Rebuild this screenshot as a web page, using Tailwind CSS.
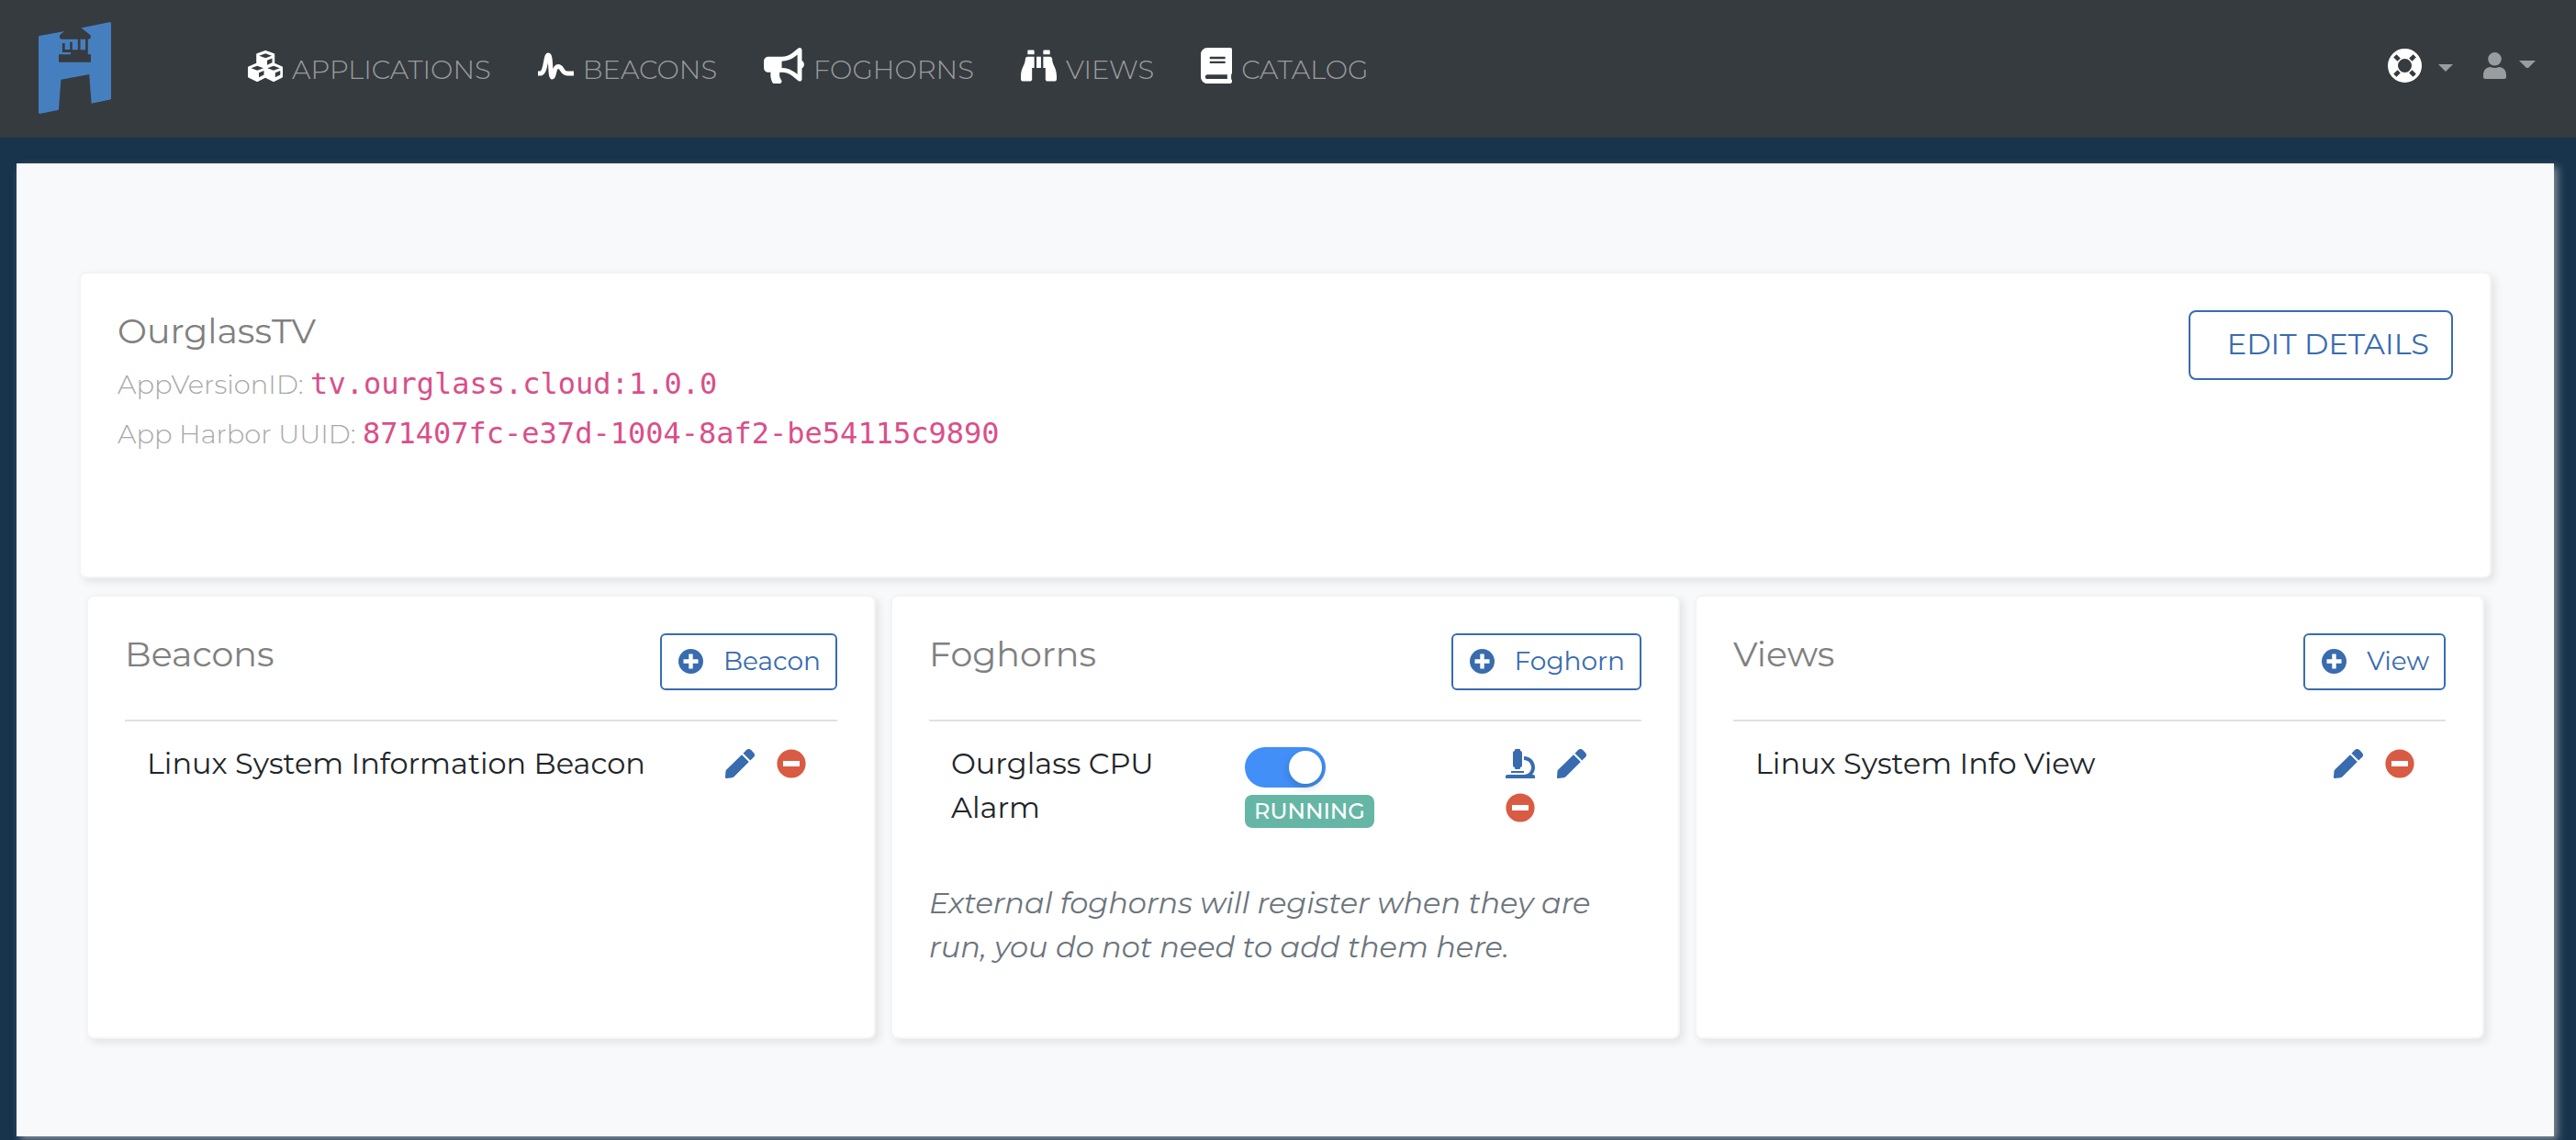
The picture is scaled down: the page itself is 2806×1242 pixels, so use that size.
<!DOCTYPE html>
<html lang="en">
<head>
<meta charset="utf-8">
<meta name="viewport" content="width=device-width, initial-scale=1">
<title>OurglassTV</title>
<script src="https://cdn.jsdelivr.net/npm/@tailwindcss/browser@4"></script>
</head>
<body class="flex min-h-screen flex-col bg-[#18344d] font-['Montserrat','DejaVu_Sans',sans-serif] text-[32px] leading-[48px] text-[#212529]">

<!-- Icon sprite -->
<svg class="hidden" aria-hidden="true">
  <symbol id="plus" viewBox="0 0 27 27"><circle cx="13.5" cy="13.5" r="13.5"/><path fill="#fff" d="M11.3 5.5h4.4v5.800h5.800v4.400h-5.800v5.800h-4.400v-5.800H5.500v-4.400h5.800z"/></symbol>
  <symbol id="minus" viewBox="0 0 32 32"><circle cx="16" cy="16" r="15.600"/><path fill="#fff" d="M7 13h18v6H7z"/></symbol>
  <symbol id="pencil" viewBox="0 0 32 32"><path d="M18 6.200 25.800 14 9.500 30.300a3 3 0 0 1-1.800.9L1.400 32A1.300 1.300 0 0 1 0 30.600l.5-6.300a3 3 0 0 1 .9-1.800zM19.500 4.700l3.600-3.600a3.600 3.600 0 0 1 5 0l2.800 2.800a3.600 3.600 0 0 1 0 5l-3.600 3.600z"/></symbol>
  <symbol id="microscope" viewBox="0 0 32 32"><path d="M10 2V1a1 1 0 0 1 1-1h4a1 1 0 0 1 1 1v1a2 2 0 0 1 2 2v14a2 2 0 0 1-2 2v1a1 1 0 0 1-1 1h-4a1 1 0 0 1-1-1v-1a2 2 0 0 1-2-2V4a2 2 0 0 1 2-2zM6 24h14v2H6zM20 8c7 0 12 5.500 12 12 0 3.200-1.200 6-3 8h1a2 2 0 0 1 2 2v2H0v-2a2 2 0 0 1 2-2h18c4.800 0 8-3.600 8-8s-3.600-8-8-8z"/></symbol>
</svg>

<header class="flex h-[150px] items-center bg-[#363b3f] pr-[44px] pl-[42px] pb-[7px] text-[#9a9d9f]">
  <a href="#" aria-label="Home">
    <svg class="mt-[5px] h-[100px] w-[79px]" viewBox="0 0 79 100">
      <path fill="#467fbf" d="M1 15 28.500 10 23 14.500V17.500L25 18.300H54.500L56.500 17.500V14.500L46 6.500 78 0 79 1V83.500L78 84.500 57.600 88.700 55.200 57 24.400 62.700 22 95 21 96 1 100 0 99V16z"/>
      <path fill="#467fbf" d="M23 16h33v20H23z"/>
      <path fill="#363b3f" d="M28.500 10 38 6H46L56.500 14.500V17.500L54.500 18.700H25L23 17.500V14.500zM22 35.300H57V43.700H22zM25.900 23h2.800v7h5.500v-8.300h2.600v8.600h6V18h2.700v12.300H51V18h2.800v18H35v-3h-9.100z"/>
    </svg>
  </a>
  <nav class="ml-[149px] flex items-center gap-[51px] text-[29px] font-light">
    <a href="#" class="flex items-center gap-[10px]">
      <svg class="h-[34px] w-[38px]" viewBox="0 0 38 34"><path fill="#fff" stroke="#fff" stroke-width="2" stroke-linejoin="round" d="M19.200 1 28.200 4.300V14.500L37 18.300V28.500L28 33 19 28.500 10.200 33 1 28.500V18.300L10.200 14.500V4.300z"/><path fill="#363b3f" d="M12.300 5.700 19.200 3.300 26 5.700 19.200 8.300zM21 10.800 26.500 8.500V13.200L21 15.800zM3.500 19.200 10.200 16.800 17 19.200 10.200 21.800zM12 24.300 17.500 22V26.500L12 29.300zM21.300 19.200 28 16.800 34.800 19.200 28 21.800zM29.800 24.300 35.300 22V26.500L29.800 29.300z"/></svg>
      <span class="pt-2">APPLICATIONS</span>
    </a>
    <a href="#" class="flex items-center gap-[10px]">
      <svg class="h-[30px] w-[39px]" viewBox="0 0 39 30" fill="none" stroke="#fff" stroke-width="5" stroke-linejoin="round"><path d="M0 23h2.500C9 23 8 3 11.300 3S13 27 15.500 27 17 15.500 22 15.500 25.500 23 32 23h7"/></svg>
      <span class="pt-2">BEACONS</span>
    </a>
    <a href="#" class="flex items-center gap-[10px]">
      <svg class="h-[39px] w-[44px]" viewBox="0 0 576 512" fill="#fff"><path d="M576 240c0-23.630-12.950-44.040-32-55.120V32.010C544 23.260 537.020 0 512 0c-7.120 0-14.190 2.380-19.980 7.020l-85.030 68.030C364.280 109.190 310.660 128 256 128H64c-35.350 0-64 28.650-64 64v96c0 35.350 28.650 64 64 64h33.700c-1.390 10.480-2.180 21.140-2.180 32 0 39.770 9.260 77.350 25.560 110.940 5.190 10.690 16.520 17.060 28.400 17.060h74.280c26.050 0 41.690-29.840 25.900-50.560-16.400-21.520-26.150-48.360-26.150-77.440 0-11.110 1.620-21.790 4.410-32H256c54.660 0 108.280 18.810 150.980 52.950l85.030 68.030a32.023 32.023 0 0 0 19.980 7.020c24.920 0 32-22.780 32-32V295.130C563.050 284.040 576 263.630 576 240zm-96 141.420l-33.050-26.440C392.950 311.780 325.120 288 256 288v-96c69.120 0 136.950-23.780 190.950-66.980L480 98.580v282.840z"/></svg>
      <span class="pt-2">FOGHORNS</span>
    </a>
    <a href="#" class="flex items-center gap-[10px]">
      <svg class="h-[39px] w-[39px]" viewBox="0 0 512 512" fill="#fff"><path d="M416 48c0-8.840-7.160-16-16-16h-64c-8.840 0-16 7.160-16 16v48h96V48zM63.910 159.990C61.400 253.840 3.460 274.220 0 404v44c0 17.670 14.330 32 32 32h96c17.670 0 32-14.330 32-32V288h32V128H95.840c-17.630 0-31.450 14.370-31.930 31.990zm384.180 0c-.48-17.620-14.300-31.990-31.930-31.990H320v160h32v160c0 17.670 14.330 32 32 32h96c17.670 0 32-14.330 32-32v-44c-3.460-129.780-61.400-150.160-63.910-244.010zM176 32h-64c-8.840 0-16 7.160-16 16v48h96V48c0-8.840-7.160-16-16-16zm48 256h64V128h-64v160z"/></svg>
      <span class="pt-2">VIEWS</span>
    </a>
    <a href="#" class="flex items-center gap-[10px]">
      <svg class="h-[39px] w-[34px]" viewBox="0 0 448 512" fill="#fff"><path d="M448 360V24c0-13.300-10.700-24-24-24H96C43 0 0 43 0 96v320c0 53 43 96 96 96h328c13.300 0 24-10.700 24-24v-16c0-7.500-3.500-14.300-8.900-18.700-4.200-15.400-4.200-59.300 0-74.700 5.400-4.300 8.900-11.100 8.900-18.600zM128 134c0-3.300 2.700-6 6-6h212c3.300 0 6 2.700 6 6v20c0 3.300-2.700 6-6 6H134c-3.300 0-6-2.700-6-6v-20zm0 64c0-3.300 2.700-6 6-6h212c3.300 0 6 2.700 6 6v20c0 3.300-2.700 6-6 6H134c-3.300 0-6-2.700-6-6v-20zm253.400 250H96c-17.700 0-32-14.300-32-32 0-17.600 14.400-32 32-32h285.400c-1.900 17.100-1.900 46.900 0 64z"/></svg>
      <span class="pt-2">CATALOG</span>
    </a>
  </nav>
  <div class="ml-auto flex items-center gap-[33px]">
    <button type="button" aria-label="Help" class="flex items-center gap-[18px]">
      <svg class="size-[37px]" viewBox="0 0 37 37"><circle cx="18.500" cy="18.500" r="13" fill="none" stroke="#fff" stroke-width="11"/><path stroke="#363b3f" stroke-width="4.600" d="M7.800 7.800 12.200 12.200M29.200 7.800 24.800 12.200M7.800 29.200 12.200 24.800M29.200 29.200 24.800 24.800"/></svg>
      <svg class="mt-1 h-2 w-4" viewBox="0 0 16 8" fill="currentColor"><path d="M0 0h16L8 8z"/></svg>
    </button>
    <button type="button" aria-label="Account" class="flex items-center gap-[14px]">
      <svg class="h-[29px] w-[25px]" viewBox="0 0 25 29" fill="currentColor"><circle cx="12.500" cy="7.300" r="7.300"/><path d="M0 25c0-5.500 3.200-9 8-9 2.800 1.300 6.200 1.300 9 0 4.800 0 8 3.500 8 9v1.500a2.500 2.500 0 0 1-2.500 2.500h-20A2.500 2.500 0 0 1 0 26.500z"/></svg>
      <svg class="mb-1 h-2 w-[18px]" viewBox="0 0 18 8" fill="currentColor"><path d="M0 0h18L10 8H8z"/></svg>
    </button>
  </div>
</header>

<main class="mt-7 mr-6 mb-1 ml-[18px] flex-1 bg-[#f8f9fb] pt-[118px] pb-[106px] shadow-[4px_4px_8px_rgba(200,200,200,0.6)]">
  <section class="mx-[68px] flex items-start justify-between rounded-lg border-2 border-[#f3f4f4] bg-white bg-clip-padding px-10 pt-10 pb-[128px] shadow-[4px_4px_8px_#e3e4e4]">
    <div class="text-[29px] leading-[54px] font-light text-[#a8a8a8]">
      <h1 class="mb-2 text-[38px] leading-[46px] font-normal text-[#808080]">OurglassTV</h1>
      <p>AppVersionID: <code class="font-['DejaVu_Sans_Mono',monospace] text-[32px] leading-none font-normal text-[#d94f8a]">tv.ourglass.cloud:1.0.0</code></p>
      <p>App Harbor UUID: <code class="font-['DejaVu_Sans_Mono',monospace] text-[32px] leading-none font-normal text-[#d94f8a]">871407fc-e37d-1004-8af2-be54115c9890</code></p>
    </div>
    <button type="button" class="h-[76px] rounded-lg border-2 border-[#396caf] pr-6 pb-[2px] pl-10 text-[#396caf]">EDIT DETAILS</button>
  </section>

  <div class="mx-[76px] mt-[18px] grid grid-cols-3 gap-4">
    <section class="rounded-lg border-2 border-[#f3f4f4] bg-white bg-clip-padding p-10 shadow-[4px_4px_8px_#e3e4e4]">
      <div class="flex items-start justify-between pb-8">
        <h2 class="text-[38px] leading-[46px] text-[#808080]">Beacons</h2>
        <button type="button" class="flex h-[62px] items-center gap-[22px] rounded-md border-2 border-[#396caf] pr-4 pl-[18px] pb-[2px] text-[28px] text-[#396caf]"><svg class="size-[27px] fill-[#396caf]"><use href="#plus"/></svg>Beacon</button>
      </div>
      <table class="w-full table-fixed border-t-2 border-[#dee2e6]">
        <tbody><tr class="align-top">
          <td class="px-6 pt-[22px] pb-6">Linux System Information Beacon</td>
          <td class="w-[122px] pt-[22px]"><div class="flex flex-wrap">
            <button type="button" aria-label="Edit" class="mr-6 flex h-12 w-8 items-center"><svg class="size-8 fill-[#396caf]"><use href="#pencil"/></svg></button>
            <button type="button" aria-label="Remove" class="flex h-12 w-8 items-center"><svg class="size-8 fill-[#d95b43]"><use href="#minus"/></svg></button>
          </div></td>
        </tr></tbody>
      </table>
    </section>

    <section class="rounded-lg border-2 border-[#f3f4f4] bg-white bg-clip-padding p-10 shadow-[4px_4px_8px_#e3e4e4]">
      <div class="flex items-start justify-between pb-8">
        <h2 class="text-[38px] leading-[46px] text-[#808080]">Foghorns</h2>
        <button type="button" class="flex h-[62px] items-center gap-[22px] rounded-md border-2 border-[#396caf] pr-4 pl-[18px] pb-[2px] text-[28px] text-[#396caf]"><svg class="size-[27px] fill-[#396caf]"><use href="#plus"/></svg>Foghorn</button>
      </div>
      <table class="w-full table-fixed border-t-2 border-[#dee2e6]">
        <tbody><tr class="align-top">
          <td class="px-6 pt-[22px] pb-6">Ourglass CPU Alarm</td>
          <td class="w-[284px] pt-7"><div class="flex flex-col items-start gap-2">
            <input type="checkbox" role="switch" checked aria-label="Ourglass CPU Alarm enabled" class="flex h-11 w-[88px] appearance-none justify-end rounded-full bg-[#418ff7] p-1 before:size-9 before:rounded-full before:bg-white before:shadow-[0_4px_8px_rgba(0,35,11,0.2)]">
            <span class="rounded-lg bg-[#65b6a5] px-[10px] text-[24px] leading-9 font-medium text-white">RUNNING</span>
          </div></td>
          <td class="w-[148px] pt-[22px]"><div class="flex flex-wrap">
            <button type="button" aria-label="Inspect" class="mr-6 flex h-12 w-8 items-center"><svg class="size-8 fill-[#396caf]"><use href="#microscope"/></svg></button>
            <button type="button" aria-label="Edit" class="mr-6 flex h-12 w-8 items-center"><svg class="size-8 fill-[#396caf]"><use href="#pencil"/></svg></button>
            <button type="button" aria-label="Remove" class="mr-6 flex h-12 w-8 items-center"><svg class="size-8 fill-[#d95b43]"><use href="#minus"/></svg></button>
          </div></td>
        </tr></tbody>
      </table>
      <p class="mt-8 mb-[34px] text-[#6c757d] italic">External foghorns will register when they are run, you do not need to add them here.</p>
    </section>

    <section class="rounded-lg border-2 border-[#f3f4f4] bg-white bg-clip-padding p-10 shadow-[4px_4px_8px_#e3e4e4]">
      <div class="flex items-start justify-between pb-8">
        <h2 class="text-[38px] leading-[46px] text-[#808080]">Views</h2>
        <button type="button" class="flex h-[62px] items-center gap-[22px] rounded-md border-2 border-[#396caf] pr-4 pl-[18px] pb-[2px] text-[28px] text-[#396caf]"><svg class="size-[27px] fill-[#396caf]"><use href="#plus"/></svg>View</button>
      </div>
      <table class="w-full table-fixed border-t-2 border-[#dee2e6]">
        <tbody><tr class="align-top">
          <td class="px-6 pt-[22px] pb-6">Linux System Info View</td>
          <td class="w-[122px] pt-[22px]"><div class="flex flex-wrap">
            <button type="button" aria-label="Edit" class="mr-6 flex h-12 w-8 items-center"><svg class="size-8 fill-[#396caf]"><use href="#pencil"/></svg></button>
            <button type="button" aria-label="Remove" class="flex h-12 w-8 items-center"><svg class="size-8 fill-[#d95b43]"><use href="#minus"/></svg></button>
          </div></td>
        </tr></tbody>
      </table>
    </section>
  </div>
</main>
</body>
</html>
